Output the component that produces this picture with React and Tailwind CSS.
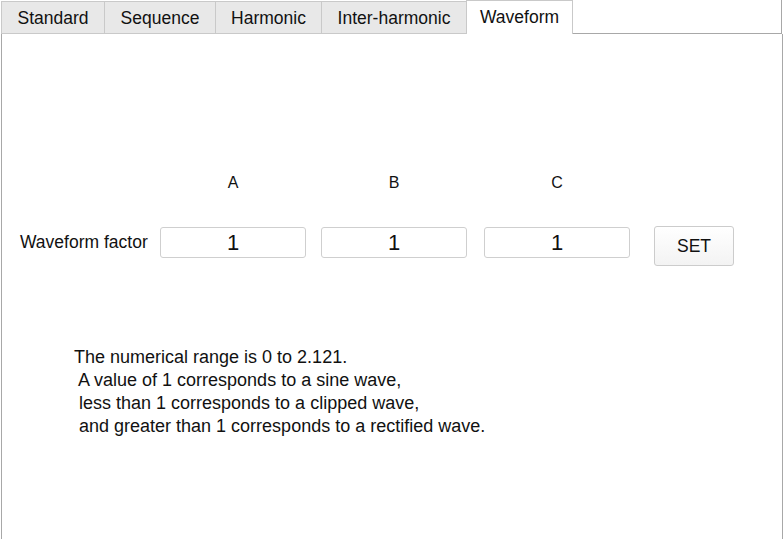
export default function App() {
  const tabs = [
    { label: "Standard", w: "w-[103px]" },
    { label: "Sequence", w: "w-[111px]" },
    { label: "Harmonic", w: "w-[106px]" },
    { label: "Inter-harmonic", w: "w-[145px]" },
  ];
  const font = { fontFamily: '"Liberation Sans", Arial, sans-serif' };
  return (
    <div
      className="w-[784px] h-[539px] bg-white flex flex-col text-[#111111] overflow-hidden"
      style={font}
    >
      <div className="flex items-end h-[34px] pl-[1px]">
        {tabs.map((t) => (
          <div
            key={t.label}
            className={`${t.w} h-[33px] flex items-center justify-center bg-[#e8e8e8] border border-r-0 border-[#c9c9c9] text-[17.5px] pt-[1px] box-border`}
          >
            {t.label}
          </div>
        ))}
        <div className="w-[107px] h-[34px] flex items-center justify-center bg-white border border-b-0 border-[#c9c9c9] text-[17.5px] pb-[1px] box-border">
          Waveform
        </div>
        <div className="w-[209px] h-[34px] border-b border-r border-[#a8a8a8] box-border" />
      </div>
      <div className="w-[782px] ml-[1px] flex-1 border-l border-r border-[#a8a8a8] box-border flex flex-col">
        <div className="flex mt-[140px] pl-[158px] text-[16px] h-[18px] items-center">
          <div className="w-[146px] text-center">A</div>
          <div className="w-[146px] ml-[15px] text-center">B</div>
          <div className="w-[146px] ml-[17px] text-center">C</div>
        </div>
        <div className="flex items-start mt-[34px]">
          <div className="w-[158px] pl-[18px] h-[31px] mt-[1px] flex items-center text-[17.5px] whitespace-nowrap">
            Waveform factor
          </div>
          <div className="w-[146px] h-[31px] mt-[1px] border border-[#cfcfcf] rounded-[3px] flex items-center justify-center text-[22px] box-border">
            1
          </div>
          <div className="w-[146px] ml-[15px] h-[31px] mt-[1px] border border-[#cfcfcf] rounded-[3px] flex items-center justify-center text-[22px] box-border">
            1
          </div>
          <div className="w-[146px] ml-[17px] h-[31px] mt-[1px] border border-[#cfcfcf] rounded-[3px] flex items-center justify-center text-[22px] box-border">
            1
          </div>
          <div className="w-[80px] ml-[24px] h-[40px] border border-[#cccccc] rounded-[3px] bg-gradient-to-b from-white to-[#f3f3f3] flex items-center justify-center text-[17.5px] box-border">
            SET
          </div>
        </div>
        <div className="mt-[80px] pl-[72px] text-[18px] leading-[23px] whitespace-pre">
          {"The numerical range is 0 to 2.121.\n A value of 1 corresponds to a sine wave,\n less than 1 corresponds to a clipped wave,\n and greater than 1 corresponds to a rectified wave."}
        </div>
      </div>
    </div>
  );
}
